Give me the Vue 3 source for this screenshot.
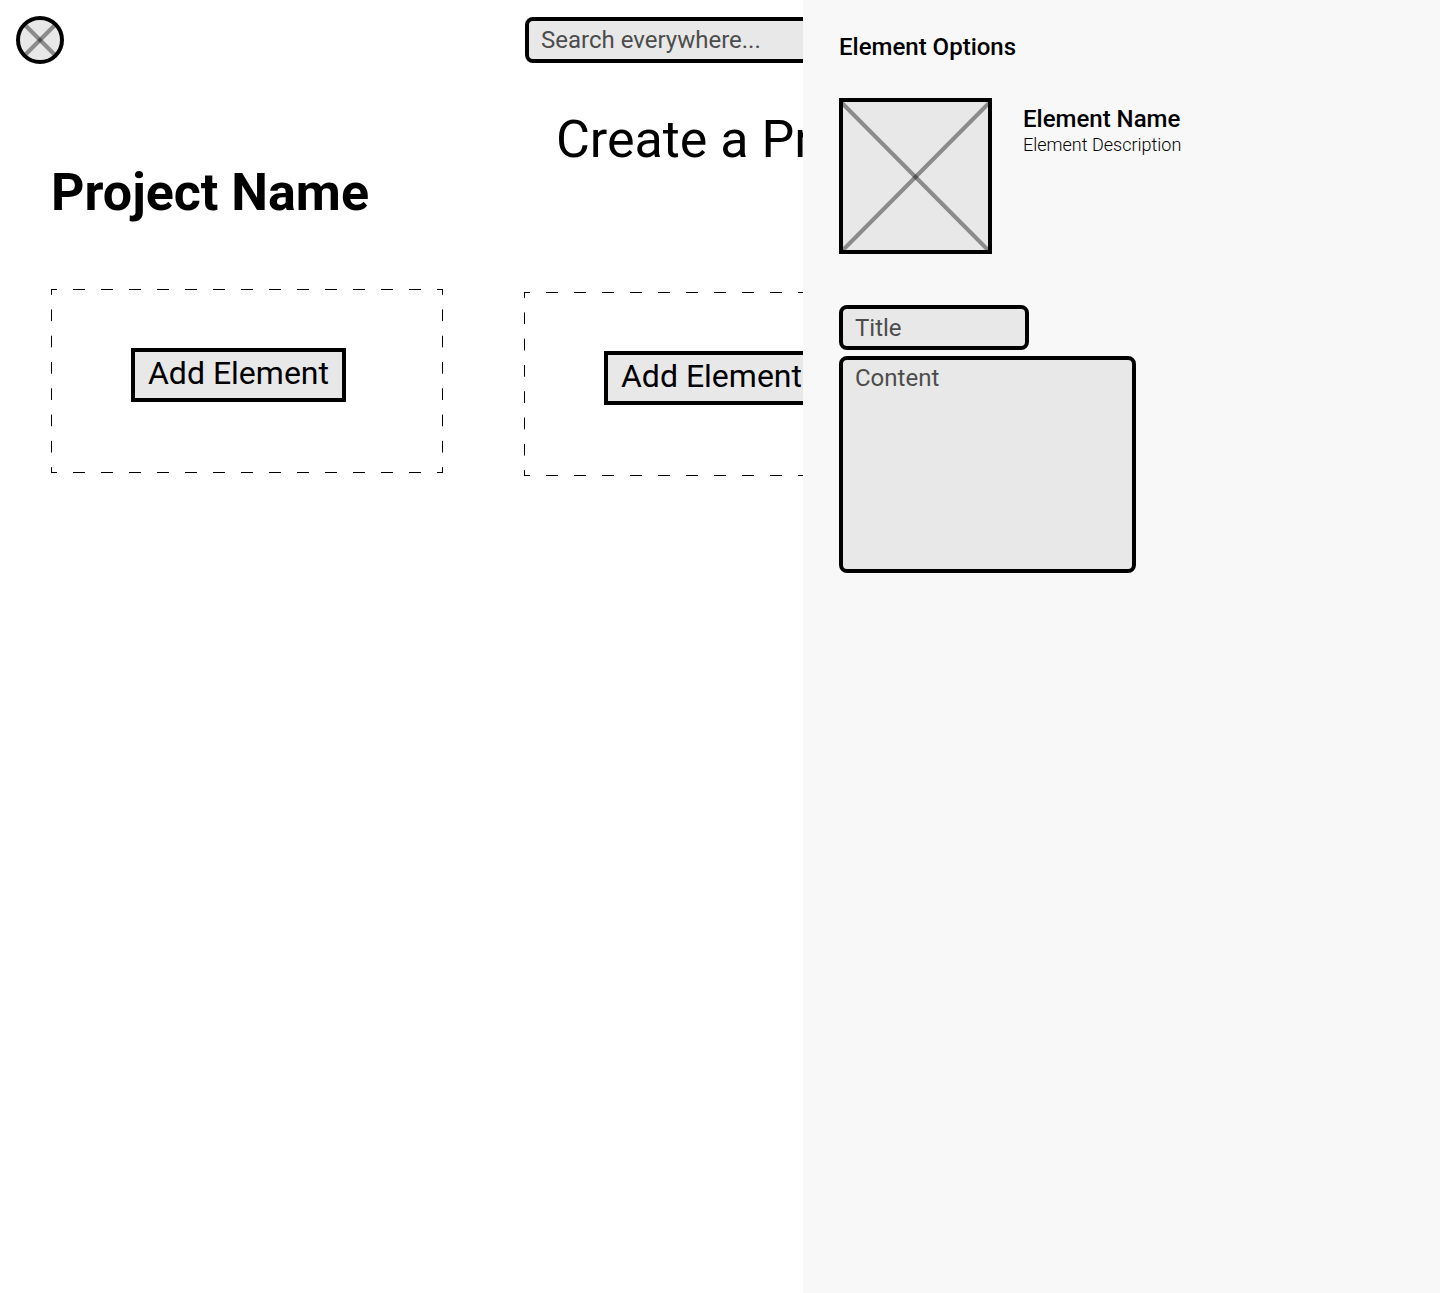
<script setup>
const cards = { left: 'Add Element', right: 'Add Element' }
</script>

<template>
  <div class="page">
    <header class="topbar">
      <svg class="avatar" viewBox="0 0 48 48" role="img" aria-label="Profile">
        <circle cx="24" cy="24" r="22" fill="#e8e8e8" />
        <path d="M9 9 39 39" stroke="#000" stroke-opacity=".4" stroke-width="4" />
        <path d="M39 9 9 39" stroke="#000" stroke-opacity=".4" stroke-width="4" />
        <circle cx="24" cy="24" r="22" fill="none" stroke="#000" stroke-width="4" />
      </svg>
      <input class="field search" type="search" placeholder="Search everywhere..." aria-label="Search everywhere" />
    </header>

    <main class="columns">
      <section class="column project">
        <h1 class="title strong">Project Name</h1>
        <div class="slot">
          <button type="button" class="add">{{ cards.left }}</button>
        </div>
      </section>
      <section class="column create">
        <h2 class="title indent">Create a Project</h2>
        <div class="slot">
          <button type="button" class="add">{{ cards.right }}</button>
        </div>
      </section>
    </main>

    <aside class="panel">
      <h2 class="label">Element Options</h2>
      <div class="element">
        <svg class="thumb" viewBox="0 0 153 156" role="img" aria-label="Element preview">
          <rect x="2" y="2" width="149" height="152" fill="#e8e8e8" />
          <path d="M2 4 151 154" stroke="#000" stroke-opacity=".4" stroke-width="4" />
          <path d="M151 4 2 154" stroke="#000" stroke-opacity=".4" stroke-width="4" />
          <rect x="2" y="2" width="149" height="152" fill="none" stroke="#000" stroke-width="4" />
        </svg>
        <div class="about">
          <h3 class="label">Element Name</h3>
          <p class="description">Element Description</p>
        </div>
      </div>
      <form class="form" @submit.prevent>
        <input class="field name" type="text" placeholder="Title" aria-label="Title" />
        <textarea class="field content" placeholder="Content" aria-label="Content"></textarea>
      </form>
    </aside>
  </div>
</template>

<style>
body {
  margin: 0;
  background: #fff;
}
</style>

<style scoped>
.page {
  position: relative;
  min-height: 100vh;
  overflow: hidden;
  color: #000;
  font-family: Roboto, "Liberation Sans", sans-serif;
}

h1,
h2,
h3,
p {
  margin: 0;
}

.topbar {
  display: grid;
  grid-template-columns: 1fr 390px 1fr;
  align-items: center;
  padding: 16px 16px 0;
}

.avatar {
  width: 48px;
  height: 48px;
}

.field {
  box-sizing: border-box;
  display: block;
  margin: 0;
  padding: 0 12px;
  border: 4px solid #000;
  border-radius: 8px;
  outline: 0;
  background: #e8e8e8;
  color: #000;
  font: 400 24px/28px Roboto, "Liberation Sans", sans-serif;
  appearance: none;
}

.field::placeholder {
  color: #4c4c4c;
  opacity: 1;
}

.search {
  width: 100%;
  height: 46px;
}

.columns {
  display: flex;
  align-items: flex-start;
  gap: 81px;
  padding: 44px 51px 0;
}

.column {
  display: flex;
  flex: none;
  flex-direction: column;
  width: 392px;
}

.project {
  gap: 64px;
  padding-top: 53px;
}

.create {
  gap: 120px;
}

.title {
  font-size: 52px;
  font-weight: 400;
  line-height: 64px;
  white-space: nowrap;
}

.strong {
  font-weight: 700;
}

.indent {
  padding-left: 32px;
}

.slot {
  box-sizing: border-box;
  height: 184px;
  padding: 59px 80px;
  background:
    linear-gradient(90deg, #000 6px, transparent 6px calc(100% - 6px), #000 calc(100% - 6px)) 0 0 / 28px 1px round no-repeat,
    linear-gradient(90deg, #000 6px, transparent 6px calc(100% - 6px), #000 calc(100% - 6px)) 0 100% / 28px 1px round no-repeat,
    linear-gradient(#000 6px, transparent 6px calc(100% - 6px), #000 calc(100% - 6px)) 0 0 / 1px 26px no-repeat round,
    linear-gradient(#000 6px, transparent 6px calc(100% - 6px), #000 calc(100% - 6px)) 100% 0 / 1px 26px no-repeat round;
}

.add {
  box-sizing: border-box;
  width: 215px;
  height: 54px;
  padding: 0 0 4px;
  border: 4px solid #000;
  background: #e8e8e8;
  color: #000;
  font: 400 32px/40px Roboto, "Liberation Sans", sans-serif;
  white-space: nowrap;
}

.panel {
  position: absolute;
  inset: 0 0 0 auto;
  box-sizing: border-box;
  width: 637px;
  padding: 33px 36px;
  background: #f8f8f8;
}

.label {
  font-size: 24px;
  font-weight: 500;
  line-height: 28px;
}

.element {
  display: flex;
  gap: 31px;
  padding-top: 37px;
}

.thumb {
  width: 153px;
  height: 156px;
}

.about {
  padding-top: 7px;
}

.description {
  font-size: 18px;
  font-weight: 300;
  line-height: 24px;
}

.form {
  display: flex;
  flex-direction: column;
  align-items: flex-start;
  gap: 6px;
  padding-top: 51px;
}

.name {
  width: 190px;
  height: 45px;
}

.content {
  width: 297px;
  height: 217px;
  padding-top: 4px;
  resize: none;
}
</style>
